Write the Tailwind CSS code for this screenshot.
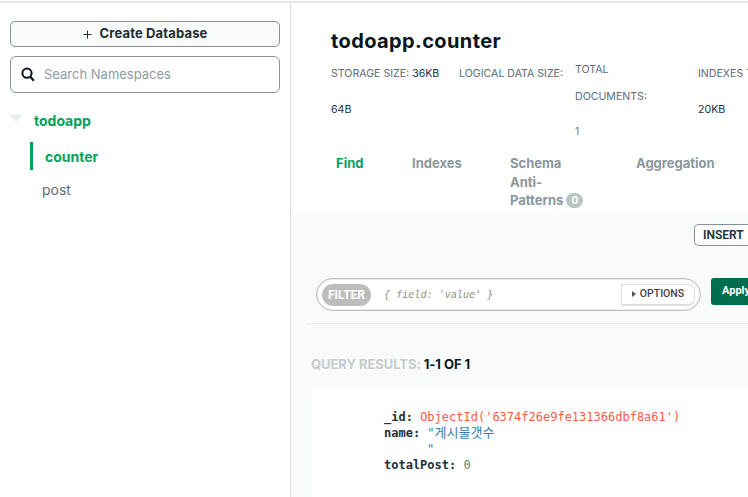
<!doctype html>
<html><head><meta charset="utf-8"><script src="https://cdn.jsdelivr.net/npm/@tailwindcss/browser@4"></script></head>
<body class="bg-white overflow-hidden">
<div class="w-[748px] h-[497px] overflow-hidden flex flex-col font-['Inter','Noto_Sans_CJK_KR',sans-serif]">
  <div class="h-[3px] w-full shrink-0 border-b-2 border-[#e4e6e6] "></div>
  <div class="flex flex-1 min-h-0">
    <aside class="w-[291px] shrink-0 border-r border-[#dcdfdf] pt-[18px] pl-[10px] pr-[10px]">
      <div class="h-[26px] w-[270px] flex items-center justify-center gap-[8px] border border-[#889397] rounded-[5px] bg-[#f9fbfa] text-[13px] font-bold text-[#1c2d38] tracking-[0.15px]">
        <svg width="9" height="9" viewBox="0 0 9 9" class="shrink-0"><path d="M4.5 0.5v8M0.5 4.5h8" stroke="#1c2d38" stroke-width="1"/></svg>
        <span>Create Database</span>
      </div>
      <div class="mt-[9px] h-[37px] w-[270px] flex items-center border border-[#889397] rounded-[6px] pl-[10px]">
        <svg width="14" height="15" viewBox="0 0 14 15" class="shrink-0"><circle cx="6" cy="6.2" r="4.6" fill="none" stroke="#061621" stroke-width="2"/><path d="M9.3 9.8l3.6 4" stroke="#061621" stroke-width="2.2"/></svg>
        <span class="ml-[9px] text-[13px] text-[#8f9ba1]">Search Namespaces</span>
      </div>
      <div class="mt-[17px] flex items-center h-[20px]">
        <svg width="12" height="7" viewBox="0 0 12 7" class="shrink-0 mb-[3px]"><path d="M0 0h12L6 7z" fill="#e7eeec"/></svg>
        <span class="ml-[12px] text-[14px] font-bold text-[#00a35c]">todoapp</span>
      </div>
      <div class="mt-[12px] ml-[20px] h-[28px] border-l-[3px] border-[#00a35c] flex items-center pl-[12px] text-[14px] font-bold text-[#00a35c]">counter</div>
      <div class="mt-[10px] ml-[32px] text-[14px] leading-[20px] text-[#5d6c74]">post</div>
    </aside>
    <main class="flex-1 min-w-0 overflow-hidden flex flex-col">
      <section class="bg-white h-[211px] shrink-0 pl-[40px] pt-[24px] relative">
        <h1 class="text-[20px] leading-[28px] font-bold text-[#061621] tracking-[0.4px]">todoapp.counter</h1>
        <div class="mt-[5px] flex items-start text-[10.6px] text-[#5d6c74] w-[500px]">
          <div class="w-[128px]">
            <div class="leading-[20px] mt-[4px] whitespace-nowrap">STORAGE SIZE: <span class="text-[#21313c]">36KB</span></div>
            <div class="leading-[20px] mt-[16px] text-[#21313c]">64B</div>
          </div>
          <div class="w-[116px] leading-[20px] mt-[4px] whitespace-nowrap">LOGICAL DATA SIZE:</div>
          <div class="w-[123px]">
            <div class="leading-[20px] mt-0">TOTAL</div>
            <div class="leading-[20px] mt-[7px]">DOCUMENTS:</div>
            <div class="leading-[20px] mt-[15px] text-[#8a7a50]">1</div>
          </div>
          <div class="shrink-0">
            <div class="leading-[20px] mt-[4px] whitespace-nowrap">INDEXES TOTAL SIZE:</div>
            <div class="leading-[20px] mt-[16px] text-[#21313c]">20KB</div>
          </div>
        </div>
        <div class="mt-[12px] ml-[5px] flex items-start text-[13px] font-bold text-[#8b979c] w-[500px] leading-[18.5px]">
          <div class="w-[76px] text-[#00a35c]">Find</div>
          <div class="w-[98px]">Indexes</div>
          <div class="w-[126px]">
            <div>Schema</div><div>Anti-</div>
            <div class="flex items-center">Patterns<span class="ml-[3px] w-[17px] h-[15px] rounded-full bg-[#b8c4c2] text-white text-[10px] flex items-center justify-center">0</span></div>
          </div>
          <div>Aggregation</div>
        </div>
      </section>
      <section class="flex-1 bg-[#f9fbfa] pt-[10px] pl-[16px] min-h-0">
        <div class="flex justify-end"><div class="w-[54px] h-[22px] border border-[#889397] rounded-l-[5px] border-r-0 bg-white text-[12px] font-semibold text-[#21313c] pl-[8px] leading-[20px] whitespace-nowrap overflow-hidden font-['Roboto',sans-serif]">INSERT</div></div>
        <div class="mt-[32px] pl-[9px] flex items-start">
          <div class="w-[385px] shrink-0 h-[33px] border border-[#bdbdbd] rounded-full bg-white flex items-center pl-[5px] pr-[5px] shadow-[inset_0_0_0_1px_#ececec]">
            <span class="w-[49px] h-[22px] rounded-full bg-[#bdbdbd] text-white text-[12px] font-bold flex items-center justify-center font-['Roboto',sans-serif]">FILTER</span>
            <span class="ml-[13px] font-['DejaVu_Sans_Mono',monospace] italic text-[10.1px] text-[#8f8f80]">{ field: 'value' }</span>
            <span class="ml-auto w-[74px] h-[22px] bg-white border border-[#dddddd] border-b-2 rounded-r-[7px] text-[10.5px] font-medium text-[#444] flex items-center justify-center gap-[4px] font-['Roboto',sans-serif]"><svg width="4" height="6" viewBox="0 0 4 6"><path d="M0 0l4 3-4 3z" fill="#555"/></svg>OPTIONS</span>
          </div>
          <div class="ml-[10px] w-[60px] shrink-0 h-[27px] bg-[#016e4d] rounded-l-[3px] text-white text-[11px] font-bold flex items-center pl-[11px] font-['Roboto',sans-serif]">Apply</div>
        </div>
        <div class="mt-[12px] -ml-[1px] border-t border-[#e7eeec]"></div>
        <div class="mt-[30px] ml-[4px] text-[13px] leading-[20px] font-bold tracking-[-0.05px]"><span class="text-[#c5cccc]">QUERY RESULTS:</span> <span class="text-[#061621]">1-1 OF 1</span></div>
        <div class="mt-[15px] ml-[4px] bg-white h-[120px] pt-[20px] pl-[73px] font-['DejaVu_Sans_Mono','Noto_Sans_CJK_KR',monospace] text-[12px] leading-[16px] whitespace-nowrap">
          <div><span class="font-semibold text-[#21313c]">_id:</span> <span class="text-[#ff5a45]">ObjectId('6374f26e9fe131366dbf8a61')</span></div>
          <div><span class="font-semibold text-[#21313c]">name:</span> <span class="text-[#3d7cab]">"<span class="text-[13px] leading-[16px]">게시물갯수</span></span></div>
          <div class="pl-[43px] text-[#3d7cab]">"</div>
          <div><span class="font-semibold text-[#21313c]">totalPost:</span> <span class="text-[#4a8a7a]">0</span></div>
        </div>
      </section>
    </main>
  </div>
</div>
</body></html>
